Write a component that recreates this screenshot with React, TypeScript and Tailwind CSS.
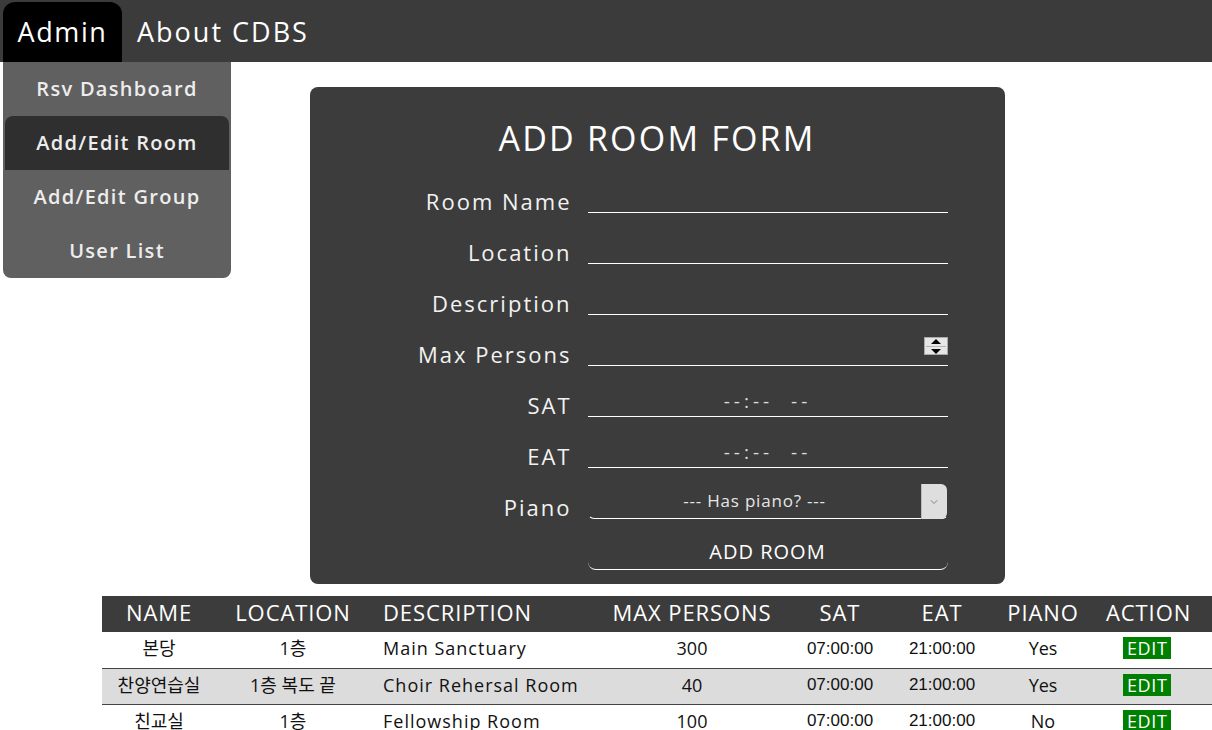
import { ChevronDown } from 'lucide-react';

type Room = {
    name: string;
    location: string;
    description: string;
    maxPersons: number;
    sat: string;
    eat: string;
    piano: string;
};

const rooms: Room[] = [
    { name: '본당', location: '1층', description: 'Main Sanctuary', maxPersons: 300, sat: '07:00:00', eat: '21:00:00', piano: 'Yes' },
    { name: '찬양연습실', location: '1층 복도 끝', description: 'Choir Rehersal Room', maxPersons: 40, sat: '07:00:00', eat: '21:00:00', piano: 'Yes' },
    { name: '친교실', location: '1층', description: 'Fellowship Room', maxPersons: 100, sat: '07:00:00', eat: '21:00:00', piano: 'No' },
];

const font = "font-['Open_Sans','Noto_Sans_CJK_KR',sans-serif]";

const menuItems = ['Rsv Dashboard', 'Add/Edit Room', 'Add/Edit Group', 'User List'];

const FormRow: React.FC<{ label: string; children: React.ReactNode }> = ({ label, children }) => (
    <div className="flex items-end h-[51px]">
        <label className="w-[262px] text-right text-[22px] leading-[24px] text-[#f2f2f2] tracking-[2px]">{label}</label>
        <div className="ml-4 w-[360px]">{children}</div>
    </div>
);

const App = () => (
    <div className={`${font} min-h-[730px] bg-white relative overflow-hidden`}>
        <nav className="h-[62px] bg-[#3b3b3b] flex items-end pl-[3px]">
            <div className="h-[60px] w-[119px] bg-black rounded-t-xl flex items-center justify-center text-[27px] text-white tracking-[1.6px]">Admin</div>
            <div className="h-[60px] flex items-center ml-[15px] text-[27px] text-white tracking-[2px]">About CDBS</div>
        </nav>

        <div className="absolute left-[3px] top-[62px] w-[228px] bg-[#606060] rounded-b-lg overflow-hidden">
            {menuItems.map(item => (
                <div
                    key={item}
                    className={`h-[54px] flex items-center justify-center text-[20px] font-semibold tracking-[1.3px] text-[#ededed] ${item === 'Add/Edit Room' ? 'bg-[#2f2f2f] mx-[2px] rounded-t-lg' : ''}`}
                >
                    {item}
                </div>
            ))}
        </div>

        <div className="ml-[102px]">
            <div className="flex justify-center pt-[25px]">
                <div className="w-[695px] h-[497px] bg-[#3c3c3c] rounded-lg">
                    <h1 className="pt-[33px] mb-[6px] text-center text-[34px] leading-[36px] text-white tracking-[2.2px]">ADD ROOM FORM</h1>
                    <FormRow label="Room Name">
                        <div className="h-[30px] border-b border-white" />
                    </FormRow>
                    <FormRow label="Location">
                        <div className="h-[30px] border-b border-white" />
                    </FormRow>
                    <FormRow label="Description">
                        <div className="h-[30px] border-b border-white" />
                    </FormRow>
                    <FormRow label="Max Persons">
                        <div className="h-[30px] border-b border-white flex items-start justify-end pt-[1px]">
                            <div className="w-[24px] h-[18px] bg-[#e6e6e6] border border-[#a9a9a9] flex flex-col items-center justify-center gap-[2px]">
                                <svg width="10" height="5" viewBox="0 0 10 5"><path d="M0 5 L5 0 L10 5 Z" fill="#000" /></svg>
                                <div className="w-[20px] h-px bg-[#b5b5b5]" />
                                <svg width="10" height="5" viewBox="0 0 10 5"><path d="M0 0 L5 5 L10 0 Z" fill="#000" /></svg>
                            </div>
                        </div>
                    </FormRow>
                    <FormRow label="SAT">
                        <div className="h-[30px] border-b border-white flex items-center justify-center text-[19px] text-[#dcdcdc] tracking-[4px]">--:--&nbsp;&nbsp;--</div>
                    </FormRow>
                    <FormRow label="EAT">
                        <div className="h-[30px] border-b border-white flex items-center justify-center text-[19px] text-[#dcdcdc] tracking-[4px]">--:--&nbsp;&nbsp;--</div>
                    </FormRow>
                    <FormRow label="Piano">
                        <div className="h-[35px] border-b border-x border-white rounded-b-md flex items-stretch [border-left-color:transparent] [border-right-color:transparent] relative">
                            <div className="flex-1 flex items-center justify-center text-[17px] text-[#e6e6e6] tracking-[0.8px]">--- Has piano? ---</div>
                            <div className="w-[26px] bg-[#dedede] rounded-r-md border-l border-[#bbb] flex items-center justify-center -mb-px">
                                <ChevronDown className="w-[12px] h-[12px] text-[#666]" strokeWidth={1.5} />
                            </div>
                        </div>
                    </FormRow>
                    <div className="flex h-[51px] items-end">
                        <div className="ml-[278px] w-[360px] h-[36px] border-b border-white rounded-b-lg flex items-center justify-center text-[20px] text-white tracking-[1px]">
                            ADD ROOM
                        </div>
                    </div>
                </div>
            </div>

            <table className="mt-[12px] w-[1110px] border-collapse table-fixed">
                <colgroup>
                    <col className="w-[114px]" />
                    <col className="w-[154px]" />
                    <col className="w-[234px]" />
                    <col className="w-[176px]" />
                    <col className="w-[120px]" />
                    <col className="w-[84px]" />
                    <col className="w-[118px]" />
                    <col className="w-[110px]" />
                </colgroup>
                <thead>
                    <tr className="h-[36px] bg-[#3c3c3c] text-white text-[22px] leading-[30px] tracking-[0.9px]">
                        <th className="font-normal pb-[5px]">NAME</th>
                        <th className="font-normal pb-[5px]">LOCATION</th>
                        <th className="font-normal pb-[5px] text-left pl-[13px]">DESCRIPTION</th>
                        <th className="font-normal pb-[5px]">MAX PERSONS</th>
                        <th className="font-normal pb-[5px]">SAT</th>
                        <th className="font-normal pb-[5px]">EAT</th>
                        <th className="font-normal pb-[5px]">PIANO</th>
                        <th className="font-normal pb-[5px] text-left pl-[4px]">ACTION</th>
                    </tr>
                </thead>
                <tbody>
                    {rooms.map((room, i) => (
                        <tr key={room.name} className={`h-[36px] text-[18px] text-[#111] border-b border-[#444] ${i % 2 === 1 ? 'bg-[#dcdcdc]' : 'bg-white'}`}>
                            <td className="text-center pb-[2px]">{room.name}</td>
                            <td className="text-center pb-[2px]">{room.location}</td>
                            <td className="text-left pl-[13px] pb-[2px] tracking-[1px]">{room.description}</td>
                            <td className="text-center pb-[2px]">{room.maxPersons}</td>
                            <td className="text-center pb-[2px] font-['Liberation_Sans',sans-serif] text-[17px]">{room.sat}</td>
                            <td className="text-center pb-[2px] font-['Liberation_Sans',sans-serif] text-[17px]">{room.eat}</td>
                            <td className="text-center pb-[2px]">{room.piano}</td>
                            <td className="pl-[21px] pb-[2px]">
                                <span className="inline-block bg-[#008000] text-white px-[4px] leading-[22px] text-[18px] tracking-[0.6px]">EDIT</span>
                            </td>
                        </tr>
                    ))}
                </tbody>
            </table>
        </div>
    </div>
);

export default App;
